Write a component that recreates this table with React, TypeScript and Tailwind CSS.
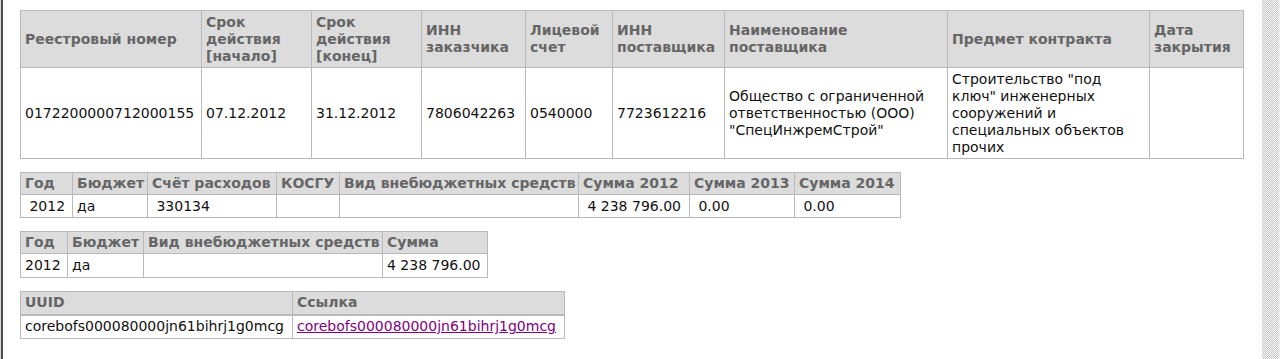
import React from 'react'

const th = 'border border-[#b9b9b9] bg-[#dcdcdc] px-[4px] text-left align-middle font-bold text-[#666666]'
const td = 'border border-[#b9b9b9] px-[4px] align-middle text-[#111111]'

function Cols({ widths }: { widths: number[] }) {
  return (
    <colgroup>
      {widths.map((w, i) => (
        <col key={i} width={w} />
      ))}
    </colgroup>
  )
}

export default function App() {
  return (
    <div
      className="flex h-[359px] w-[1280px] bg-white text-[14px] leading-[17px]"
      style={{ fontFamily: '"DejaVu Sans", Verdana, sans-serif' }}
    >
      <div className="w-[1px] bg-[#d8d8d8]" />
      <div className="w-[2px] bg-[#4b4b4b]" />
      <div className="flex flex-1 flex-col gap-[13px] pl-[17px] pt-[10px]">
        <table className="w-[1224px] table-fixed border-collapse">
          <Cols widths={[181, 110, 110, 104, 87, 112, 223, 202, 94]} />
          <thead>
            <tr className="h-[57px]">
              <th className={th}>Реестровый номер</th>
              <th className={th}>Срок<br />действия<br />[начало]</th>
              <th className={th}>Срок<br />действия<br />[конец]</th>
              <th className={th}>ИНН<br />заказчика</th>
              <th className={th}>Лицевой<br />счет</th>
              <th className={th}>ИНН<br />поставщика</th>
              <th className={th}>Наименование<br />поставщика</th>
              <th className={th}>Предмет контракта</th>
              <th className={th}>Дата<br />закрытия</th>
            </tr>
          </thead>
          <tbody>
            <tr className="h-[91px]">
              <td className={td}>0172200000712000155</td>
              <td className={td}>07.12.2012</td>
              <td className={td}>31.12.2012</td>
              <td className={td}>7806042263</td>
              <td className={td}>0540000</td>
              <td className={td}>7723612216</td>
              <td className={td}>
                Общество с ограниченной<br />ответственностью (ООО)<br />"СпецИнжремСтрой"
              </td>
              <td className={td}>
                Строительство "под<br />ключ" инженерных<br />сооружений и<br />специальных объектов<br />прочих
              </td>
              <td className={td}></td>
            </tr>
          </tbody>
        </table>

        <table className="w-[881px] table-fixed border-collapse whitespace-nowrap">
          <Cols widths={[52, 75, 129, 63, 239, 111, 105, 106]} />
          <thead>
            <tr className="h-[22px]">
              <th className={th}>Год</th>
              <th className={th}>Бюджет</th>
              <th className={th}>Счёт расходов</th>
              <th className={th}>КОСГУ</th>
              <th className={th}>Вид внебюджетных средств</th>
              <th className={th}>Сумма 2012</th>
              <th className={th}>Сумма 2013</th>
              <th className={th}>Сумма 2014</th>
            </tr>
          </thead>
          <tbody>
            <tr className="h-[23px]">
              <td className={td}>&nbsp;2012</td>
              <td className={td}>да</td>
              <td className={td}>&nbsp;330134</td>
              <td className={td}></td>
              <td className={td}></td>
              <td className={td}>&nbsp;4 238 796.00</td>
              <td className={td}>&nbsp;0.00</td>
              <td className={td}>&nbsp;0.00</td>
            </tr>
          </tbody>
        </table>

        <table className="w-[468px] table-fixed border-collapse whitespace-nowrap">
          <Cols widths={[47, 76, 239, 105]} />
          <thead>
            <tr className="h-[22px]">
              <th className={th}>Год</th>
              <th className={th}>Бюджет</th>
              <th className={th}>Вид внебюджетных средств</th>
              <th className={th}>Сумма</th>
            </tr>
          </thead>
          <tbody>
            <tr className="h-[24px]">
              <td className={td}>2012</td>
              <td className={td}>да</td>
              <td className={td}></td>
              <td className={td}>4 238 796.00</td>
            </tr>
          </tbody>
        </table>

        <table className="w-[545px] table-fixed border-collapse whitespace-nowrap">
          <Cols widths={[272, 272]} />
          <thead>
            <tr className="h-[23px]">
              <th className={`${th} border-b-2`}>UUID</th>
              <th className={`${th} border-b-2`}>Ссылка</th>
            </tr>
          </thead>
          <tbody>
            <tr className="h-[24px]">
              <td className={td}>corebofs000080000jn61bihrj1g0mcg</td>
              <td className={td}>
                <a href="#" className="text-[#800080] underline">
                  corebofs000080000jn61bihrj1g0mcg
                </a>
              </td>
            </tr>
          </tbody>
        </table>
      </div>
      <div className="w-[17px] bg-[repeating-conic-gradient(#c9c9c9_0_25%,#f5f5f5_0_50%)] bg-[length:2px_2px]" />
      <div className="w-[1px] bg-[#efefef]" />
    </div>
  )
}
